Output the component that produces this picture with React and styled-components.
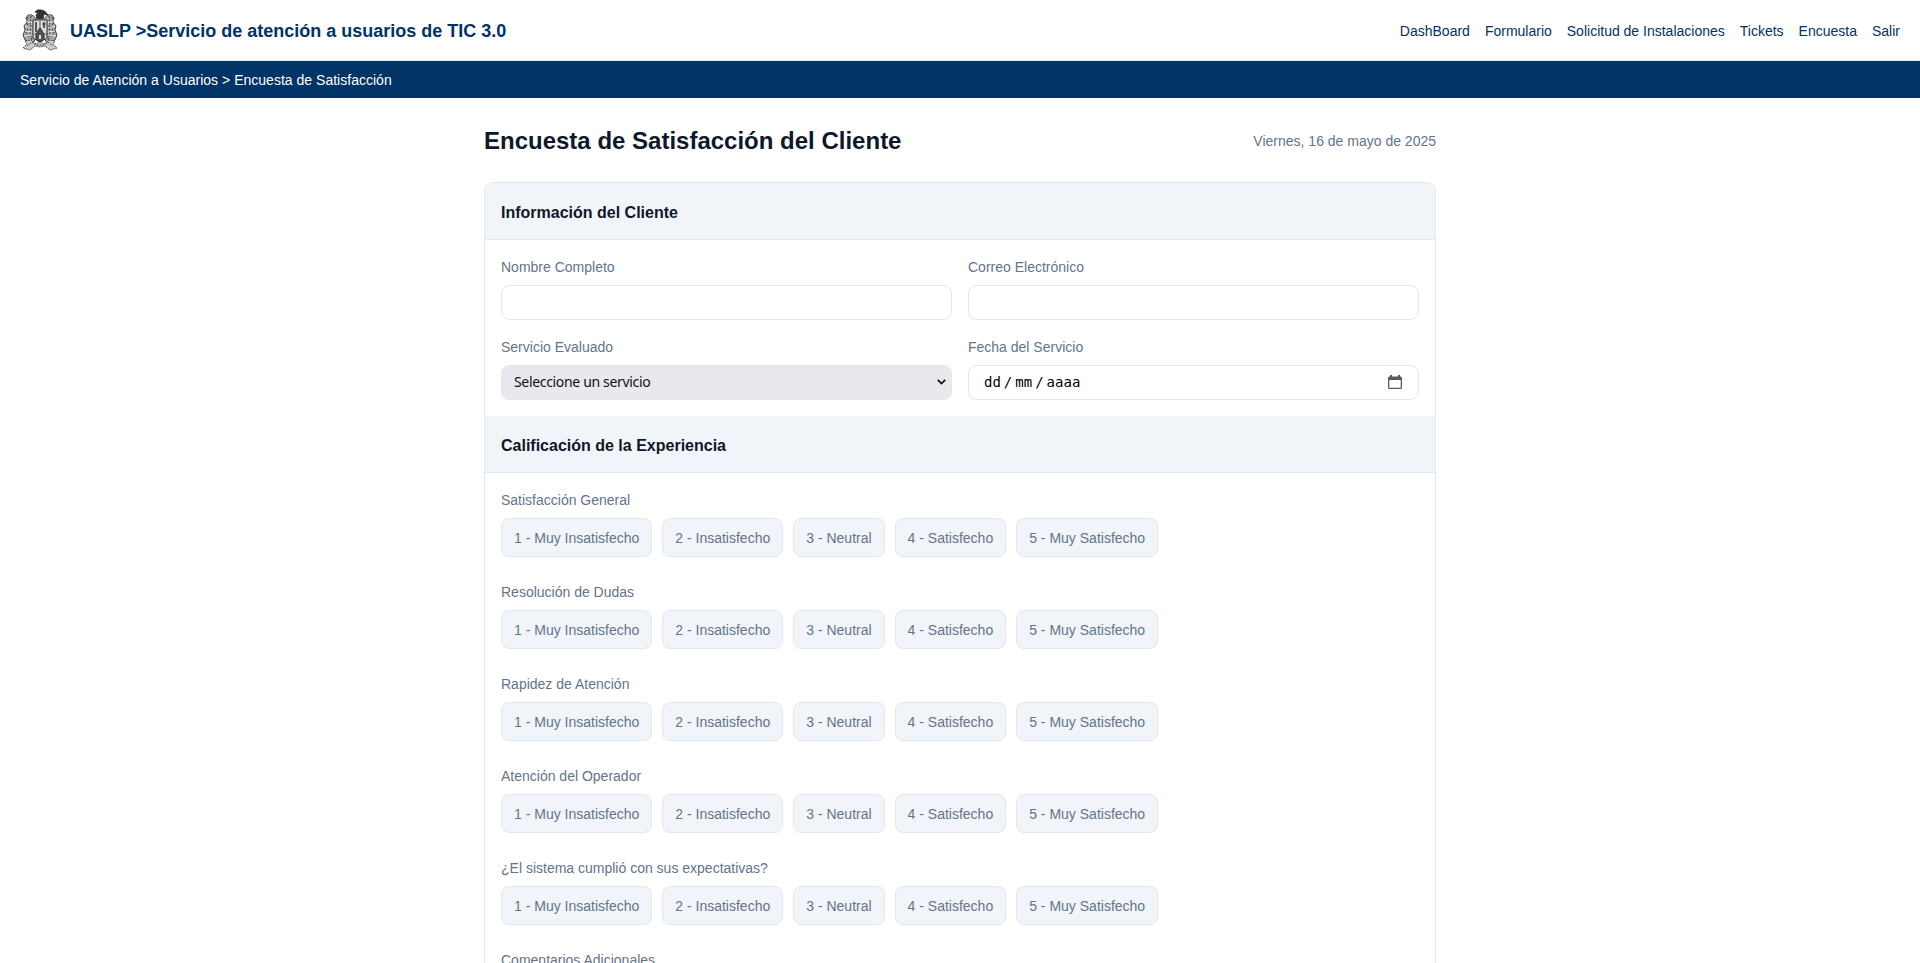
import React from "react";
import styled, { createGlobalStyle } from "styled-components";

const Global = createGlobalStyle`
  *{box-sizing:border-box}
  html,body{margin:0;height:100%;overflow:hidden;background:#fff}
  body{font-family:"Liberation Sans",Arial,sans-serif;font-size:14px;color:#0f172a}
`;
const TopBar = styled.header`
  height:61px;padding:0 20px;display:flex;align-items:center;justify-content:space-between;
  border-bottom:1px solid #e2e8f0;color:#003366;
`;
const Brand = styled.div`display:flex;align-items:center;gap:10px;`;
const BrandName = styled.span`font-size:18px;font-weight:700;line-height:20px;padding-top:2px;`;
const Nav = styled.nav`display:flex;gap:15px;padding-top:2px;`;
const NavLink = styled.a`color:#003366;line-height:16px;`;
const Crumbs = styled.div`height:37px;padding:0 20px;display:flex;align-items:center;background:#003366;color:#fff;letter-spacing:0.015px;`;
const Main = styled.main`width:1000px;margin:0 auto;padding:24px;`;
const TitleRow = styled.div`height:36px;padding-top:2px;margin-bottom:24px;display:flex;align-items:center;justify-content:space-between;`;
const Title = styled.h1`margin:0;font-size:24px;line-height:34px;`;
const DateText = styled.span`color:#64748b;`;
const Card = styled.form`border:1px solid #e2e8f0;border-radius:8px;overflow:hidden;`;
const SectionHead = styled.div`height:57px;padding:3px 16px 0;display:flex;align-items:center;background:#f1f5f9;border-bottom:1px solid #e2e8f0;`;
const SectionTitle = styled.h2`margin:0;font-size:16px;line-height:24px;`;
const Fields = styled.div`padding:16px;display:grid;grid-template-columns:1fr 1fr;gap:16px;`;
const Field = styled.div`display:flex;flex-direction:column;gap:7px;`;
const Label = styled.label`color:#64748b;line-height:21px;padding-top:1px;`;
const Input = styled.input`height:35px;width:100%;border:1px solid #e2e8f0;border-radius:8px;padding:8px 12px;background:#fff;outline:none;`;
const SelectBox = styled.div`
  height:35px;padding:0 5px 1px 12px;display:flex;align-items:center;justify-content:space-between;
  border:1px solid #e2e8f0;border-radius:8px;background:#e9e9ed;color:#111;font:14px/20px "Noto Sans",sans-serif;
`;
const SelectText = styled.span`letter-spacing:-0.33px;padding-bottom:1px;`;
const DateBox = styled.div`
  height:35px;padding:0 16px 1px 15px;display:flex;align-items:center;justify-content:space-between;
  border:1px solid #e2e8f0;border-radius:8px;color:#000;font:14px/20px "DejaVu Sans Mono",monospace;
`;
const DateParts = styled.span`display:flex;gap:3px;padding-bottom:1px;`;
const Ratings = styled.div`padding:16px;display:flex;flex-direction:column;gap:24px;`;
const Options = styled.div`display:flex;gap:10px;`;
const Option = styled.button`
  height:39px;padding:0 12px;border:1px solid #e2e8f0;border-radius:8px;background:#f1f5f9;
  color:#64748b;font:14px "Liberation Sans",Arial,sans-serif;
`;
const Comments = styled.textarea`height:100px;border:1px solid #e2e8f0;border-radius:8px;resize:none;`;

const Crest = () => (
  <svg width="40" height="44" viewBox="0 0 40 44" fill="none" stroke="#333" strokeWidth=".9">
    <path d="M15 4q2-3 6-2 4 0 7 5l-4-1-1 5h-6l-1-4 2-2z" fill="#333" />
    <path d="M16 11C13 6 8 5 6 10l1 4-3 4 1 4-2 5 2 5 8 3 3-5zM24 11c3-5 8-6 10-1l-1 4 3 4-1 4 2 5-2 5-8 3-3-5z" fill="#aaa" />
    <path d="M8 9l-1 6 2 4-3 5 3 6M11 8l-1 7 1 4-1 6 2 7M32 9l1 6-2 4 3 5-3 6M29 8l1 7-1 4 1 6-2 7" stroke="#222" strokeDasharray="2 1.2" />
    <path d="M6 13l6 2M5 18l7 2M5 23l7 1M4 28l8-1M34 13l-6 2M35 18l-7 2M35 23l-7 1M36 28l-8-1" stroke="#eee" />
    <path d="M13 12h14v18l-7 4-7-4z" fill="#ddd" stroke="#222" />
    <path d="M16 14v10M24 14v6" stroke="#555" strokeWidth="2" />
    <path d="M20 13v8M22 16h4M14 26h4M22 26h5" stroke="#444" />
    <path d="M20 20c-4 5-6 10-2 13h4c4-3 2-8-2-13z" fill="#555" stroke="#222" />
    <path d="M19 27h2v4h-2z" fill="#ddd" stroke="none" />
    <path d="M5 33l6-1 4 4 5-2 5 2 4-4 6 1-2 3 4 4-7 2-5-4-5 1-5-1-5 4-7-2 4-4z" fill="#ccc" stroke="#444" strokeDasharray="2 .7" />
    <path d="M7 38l5-4 4 3h8l4-3 5 4" stroke="#333" strokeDasharray="2 1" />
  </svg>
);
const Chevron = () => (
  <svg width="9" height="6" viewBox="0 0 9 6" fill="none" stroke="#111" strokeWidth="1.7"><path d="M.8 .8l3.700 3.700L8.200 .8" /></svg>
);
const Calendar = () => (
  <svg width="14" height="15" viewBox="0 0 14 15" fill="#5b5b5b">
    <path d="M2 0h2v1.500h6V0h2v1.500h.5Q14 1.500 14 3v9.500q0 1.500-1.500 1.500h-11Q0 14 0 12.500V3q0-1.500 1.500-1.500H2zM1.300 5v7.200q0 .5.5.5h10.400q.5 0 .5-.5V5z" fillRule="evenodd" />
  </svg>
);

const links = ["DashBoard", "Formulario", "Solicitud de Instalaciones", "Tickets", "Encuesta", "Salir"];
const questions = ["Satisfacción General", "Resolución de Dudas", "Rapidez de Atención", "Atención del Operador", "¿El sistema cumplió con sus expectativas?"];
const choices = ["1 - Muy Insatisfecho", "2 - Insatisfecho", "3 - Neutral", "4 - Satisfecho", "5 - Muy Satisfecho"];

export default function App() {
  return (
    <>
      <Global />
      <TopBar>
        <Brand><Crest /><BrandName>UASLP &gt;Servicio de atención a usuarios de TIC 3.0</BrandName></Brand>
        <Nav>{links.map((l) => <NavLink key={l}>{l}</NavLink>)}</Nav>
      </TopBar>
      <Crumbs>Servicio de Atención a Usuarios &gt; Encuesta de Satisfacción</Crumbs>
      <Main>
        <TitleRow><Title>Encuesta de Satisfacción del Cliente</Title><DateText>Viernes, 16 de mayo de 2025</DateText></TitleRow>
        <Card>
          <SectionHead><SectionTitle>Información del Cliente</SectionTitle></SectionHead>
          <Fields>
            <Field><Label>Nombre Completo</Label><Input /></Field>
            <Field><Label>Correo Electrónico</Label><Input /></Field>
            <Field><Label>Servicio Evaluado</Label><SelectBox><SelectText>Seleccione un servicio</SelectText><Chevron /></SelectBox></Field>
            <Field><Label>Fecha del Servicio</Label><DateBox><DateParts><span>dd</span><span>/</span><span>mm</span><span>/</span><span>aaaa</span></DateParts><Calendar /></DateBox></Field>
          </Fields>
          <SectionHead><SectionTitle>Calificación de la Experiencia</SectionTitle></SectionHead>
          <Ratings>
            {questions.map((q) => (
              <Field key={q}><Label>{q}</Label><Options>{choices.map((c) => <Option type="button" key={c}>{c}</Option>)}</Options></Field>
            ))}
            <Field><Label>Comentarios Adicionales</Label><Comments /></Field>
          </Ratings>
        </Card>
      </Main>
    </>
  );
}
